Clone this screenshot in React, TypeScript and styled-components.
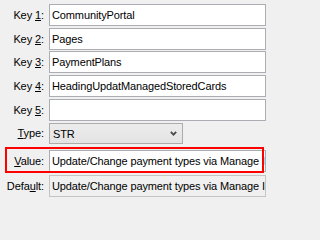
import React, { FC } from 'react'
import styled, { createGlobalStyle } from 'styled-components'

const GlobalStyle = createGlobalStyle`
html, body {
  margin: 0;
  padding: 0;
  background: #f0f0f0;
  overflow: hidden;
}
body {
  font-family: "Liberation Sans", Arial, sans-serif;
  font-size: 11px;
  color: #000;
}
`

type FieldProps = {
  label: string
  mnemonic: number
  top: number
  children: React.ReactNode
  marked?: boolean
}

const Field: FC<FieldProps> = ({ label, mnemonic, top, children, marked }) => {
  const before = label.slice(0, mnemonic)
  const key = label.charAt(mnemonic)
  const after = label.slice(mnemonic + 1)
  return (
    <Row $top={top} $marked={marked}>
      <Label>
        {before}<u>{key}</u>{after}:
      </Label>
      {children}
    </Row>
  )
}

const Chevron = () => (
  <svg width="7" height="5" viewBox="0 0 7 5">
    <path d="M0.8 0.8 L3.5 3.6 L6.2 0.8" fill="none" stroke="#4a4a4a" strokeWidth="1.8" />
  </svg>
)

const keys = ['CommunityPortal', 'Pages', 'PaymentPlans', 'HeadingUpdatManagedStoredCards', '']
const keyTops = [4, 2, 1, 2, 2]
const text = 'Update/Change payment types via Manage Ids and more'

const App: FC = () => {
  return (
    <>
      <GlobalStyle />
      <Form>
        {keys.map((k, i) => (
          <Field key={i} label={`Key ${i + 1}`} mnemonic={4} top={keyTops[i]}>
            <TextBox>{k}</TextBox>
          </Field>
        ))}
        <Field label="Type" mnemonic={0} top={2}>
          <Select>
            <span>STR</span>
            <Chevron />
          </Select>
        </Field>
        <Field label="Value" mnemonic={0} top={6} marked>
          <TextBox>{text}</TextBox>
        </Field>
        <Field label="Default" mnemonic={4} top={3}>
          <TextBox $readOnly>{text}</TextBox>
        </Field>
      </Form>
    </>
  )
}

const Form = styled.div`
display: flex;
flex-direction: column;
width: 266px;
`
const Row = styled.div<{ $top: number; $marked?: boolean }>`
position: relative;
display: flex;
align-items: center;
gap: 5px;
margin-top: ${p => p.$top}px;
&::after {
  content: '';
  display: ${p => (p.$marked ? 'block' : 'none')};
  position: absolute;
  left: 5px;
  top: -3px;
  width: 259px;
  height: 26px;
  border: 2px solid #f00;
  box-sizing: border-box;
  pointer-events: none;
}
`
const Label = styled.div`
width: 44px;
flex: none;
text-align: right;
white-space: nowrap;
line-height: 13px;
letter-spacing: -0.1px;
`
const TextBox = styled.div<{ $readOnly?: boolean }>`
box-sizing: border-box;
width: 217px;
height: 22px;
flex: none;
padding: 0 3px 0 2px;
line-height: 20px;
letter-spacing: -0.12px;
border: 1px solid ${p => (p.$readOnly ? '#c4c4c4' : '#abadb3')};
background: ${p => (p.$readOnly ? '#f0f0f0' : '#fff')};
white-space: nowrap;
overflow: hidden;
`
const Select = styled.div`
box-sizing: border-box;
width: 134px;
height: 21px;
flex: none;
display: flex;
align-items: center;
justify-content: space-between;
padding: 0 5px 0 3px;
letter-spacing: -0.12px;
border: 1px solid #acacac;
background: linear-gradient(#ececec, #e4e4e4);
`

export default App
